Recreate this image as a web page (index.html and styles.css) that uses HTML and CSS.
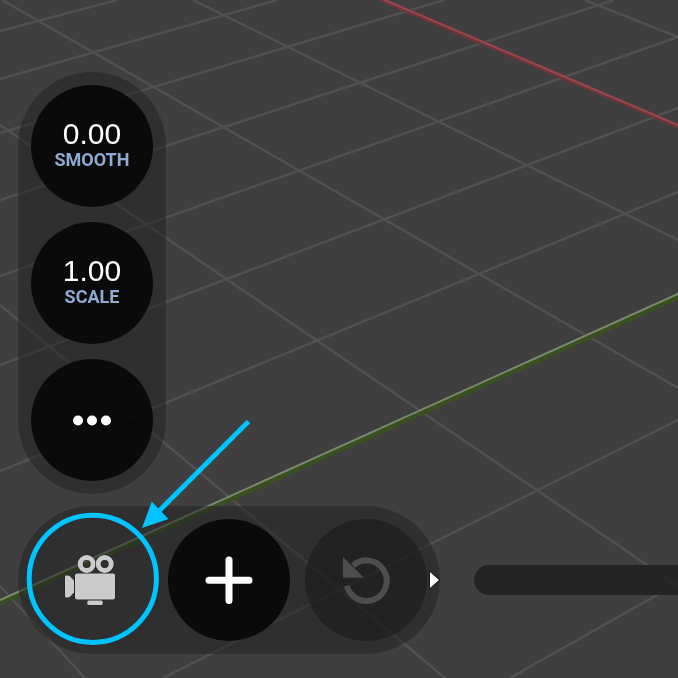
FILE: index.html
```html
<!DOCTYPE html>
<html lang="en">
  <head>
    <meta charset="UTF-8" />
    <meta name="viewport" content="width=device-width, initial-scale=1.0" />
    <title>Camera controls</title>
    <link rel="stylesheet" href="styles.css">
  </head>
  <body>
    <svg class="scene" viewBox="0 0 678 678" preserveAspectRatio="xMinYMax slice" aria-hidden="true">
      <g class="grid">
        <path d="M0 586L85 678M0 305L445 678M0 125L678 586M2 0L678 388M193 0L678 240M585 0L678 37" />
        <path d="M0 31L117 0M0 79L277 0M0 133L444 0M0 200L614 0M0 276L678 37M0 365L678 108M0 471L678 192M163 678L678 420M510 678L678 583" />
      </g>
      <path class="axis-x" d="M380 -1L680 127" />
      <path class="axis-x-light" d="M380 -2L680 126" />
      <path class="axis-y" d="M-2 604L680 296" />
      <path class="axis-y-light" d="M-2 601L680 293" />
    </svg>

    <main class="overlay">
      <div class="panel options">
        <button class="round" type="button">
          <span class="value">0.00</span>
          <span class="label">SMOOTH</span>
        </button>
        <button class="round" type="button">
          <span class="value">1.00</span>
          <span class="label">SCALE</span>
        </button>
        <button class="round" type="button" aria-label="More">
          <svg viewBox="0 0 122 122">
            <g fill="#fff">
              <circle cx="47" cy="61.500" r="5" />
              <circle cx="61" cy="61.500" r="5" />
              <circle cx="75" cy="61.500" r="5" />
            </g>
          </svg>
        </button>
      </div>

      <div class="bottom">
        <div class="panel tools">
          <button class="round camera" type="button" aria-label="Camera">
            <svg viewBox="0 0 122 122">
              <g class="camera-icon">
                <path fill-rule="evenodd" d="M46.7 45a9 9 0 1 0 18 0a9 9 0 1 0-18 0zM51.7 45a4 4 0 1 0 8 0a4 4 0 1 0-8 0z" />
                <path fill-rule="evenodd" d="M64.7 45a9 9 0 1 0 18 0a9 9 0 1 0-18 0zM69.7 45a4 4 0 1 0 8 0a4 4 0 1 0-8 0z" />
                <rect x="44" y="54.5" width="40" height="26" rx="2" />
                <path d="M35 56.500h2q1 0 2 .8l4 4.200v12l-4 4.200q-1 .8-2 .8h-2q-1 0-1-1v-20q0-1 1-1z" />
                <rect x="56.3" y="81.5" width="15.4" height="4.5" rx="1.5" />
              </g>
            </svg>
            <svg class="callout" viewBox="0 0 122 122">
              <circle cx="61.8" cy="59.8" r="63.6" />
              <path d="M217.5 -97.5L127 -7" />
              <path class="head" d="M111 9L120.7 -17.5L137.5 0z" />
            </svg>
          </button>
          <button class="round" type="button" aria-label="Add">
            <svg viewBox="0 0 122 122">
              <path class="plus" d="M41 61.3H81M61 41V81.5" />
            </svg>
          </button>
          <button class="round undo" type="button" aria-label="Undo" disabled>
            <svg viewBox="0 0 122 122">
              <path class="turn" d="M41.800 66.800A20.300 20.300 0 1 0 48 46.500" />
              <path fill="#4d4d4d" d="M38 38V58.700H59z" />
            </svg>
          </button>
          <button class="expand" type="button" aria-label="Expand">
            <svg viewBox="0 0 13 20">
              <path d="M3 2V18L12 10z" />
            </svg>
          </button>
        </div>
        <div class="track"></div>
      </div>
    </main>
  </body>
</html>
```
FILE: styles.css
```css
* {
  box-sizing: border-box;
}
body {
  margin: 0;
  background-color: #3f3f3f;
  font-family: "Liberation Sans", Arial, sans-serif;
  overflow: hidden;
}
button {
  margin: 0;
  padding: 0;
  border: 0;
  background: none;
  color: white;
  font: inherit;
  cursor: pointer;
}
svg {
  display: block;
  fill: none;
}

/* viewport floor */
.scene {
  position: fixed;
  inset: 0;
  width: 100%;
  height: 100%;
}
.grid {
  stroke: #515151;
  stroke-width: 2.5;
}
.axis-x {
  stroke: #6b353a;
  stroke-width: 5;
}
.axis-x-light {
  stroke: #94494e;
  stroke-width: 2;
}
.axis-y {
  stroke: #39501f;
  stroke-width: 5;
}
.axis-y-light {
  stroke: #7b8771;
  stroke-width: 2;
}

.overlay {
  position: relative;
  min-height: 100vh;
  display: flex;
  flex-direction: column;
  justify-content: flex-end;
  align-items: flex-start;
  gap: 12px;
  padding: 24px 0 24px 18px;
}
.panel {
  display: flex;
  gap: 15px;
  padding: 13px;
  border-radius: 74px;
  background-color: rgba(31, 31, 31, .5);
}
.options {
  flex-direction: column;
}
.bottom {
  display: flex;
  align-items: center;
  align-self: stretch;
  gap: 34px;
}
.tools {
  position: relative;
}
.round {
  display: flex;
  flex-direction: column;
  align-items: center;
  justify-content: center;
  flex: none;
  width: 122px;
  height: 122px;
  border-radius: 50%;
  background-color: rgba(6, 6, 6, .88);
}
.round svg {
  width: 122px;
  height: 122px;
}
.value {
  font-size: 30px;
  line-height: 28px;
}
.label {
  color: #8eaad0;
  font-family: Roboto, "Liberation Sans", sans-serif;
  font-size: 18px;
  font-weight: bold;
  line-height: 24px;
}

.camera {
  position: relative;
  background: none;
}
.camera-icon {
  fill: #cbcbcb;
  stroke: #252525;
  stroke-width: 1;
  paint-order: stroke;
}
.callout {
  position: absolute;
  inset: 0;
  overflow: visible;
  stroke: #00c3ff;
  stroke-width: 5;
  pointer-events: none;
}
.callout .head {
  fill: #00c3ff;
  stroke: none;
}
.plus {
  stroke: white;
  stroke-width: 7;
  stroke-linecap: round;
}
.undo {
  background-color: rgba(26, 26, 26, .6);
}
.turn {
  stroke: #4d4d4d;
  stroke-width: 6;
}
.expand {
  position: absolute;
  right: 0;
  top: 64px;
  width: 13px;
  height: 20px;
}
.expand path {
  fill: white;
  stroke: #151515;
  stroke-width: 2;
  paint-order: stroke;
}
.track {
  flex: 1;
  height: 30px;
  border-radius: 15px 0 0 15px;
  background-color: rgba(32, 32, 32, .85);
}
```
